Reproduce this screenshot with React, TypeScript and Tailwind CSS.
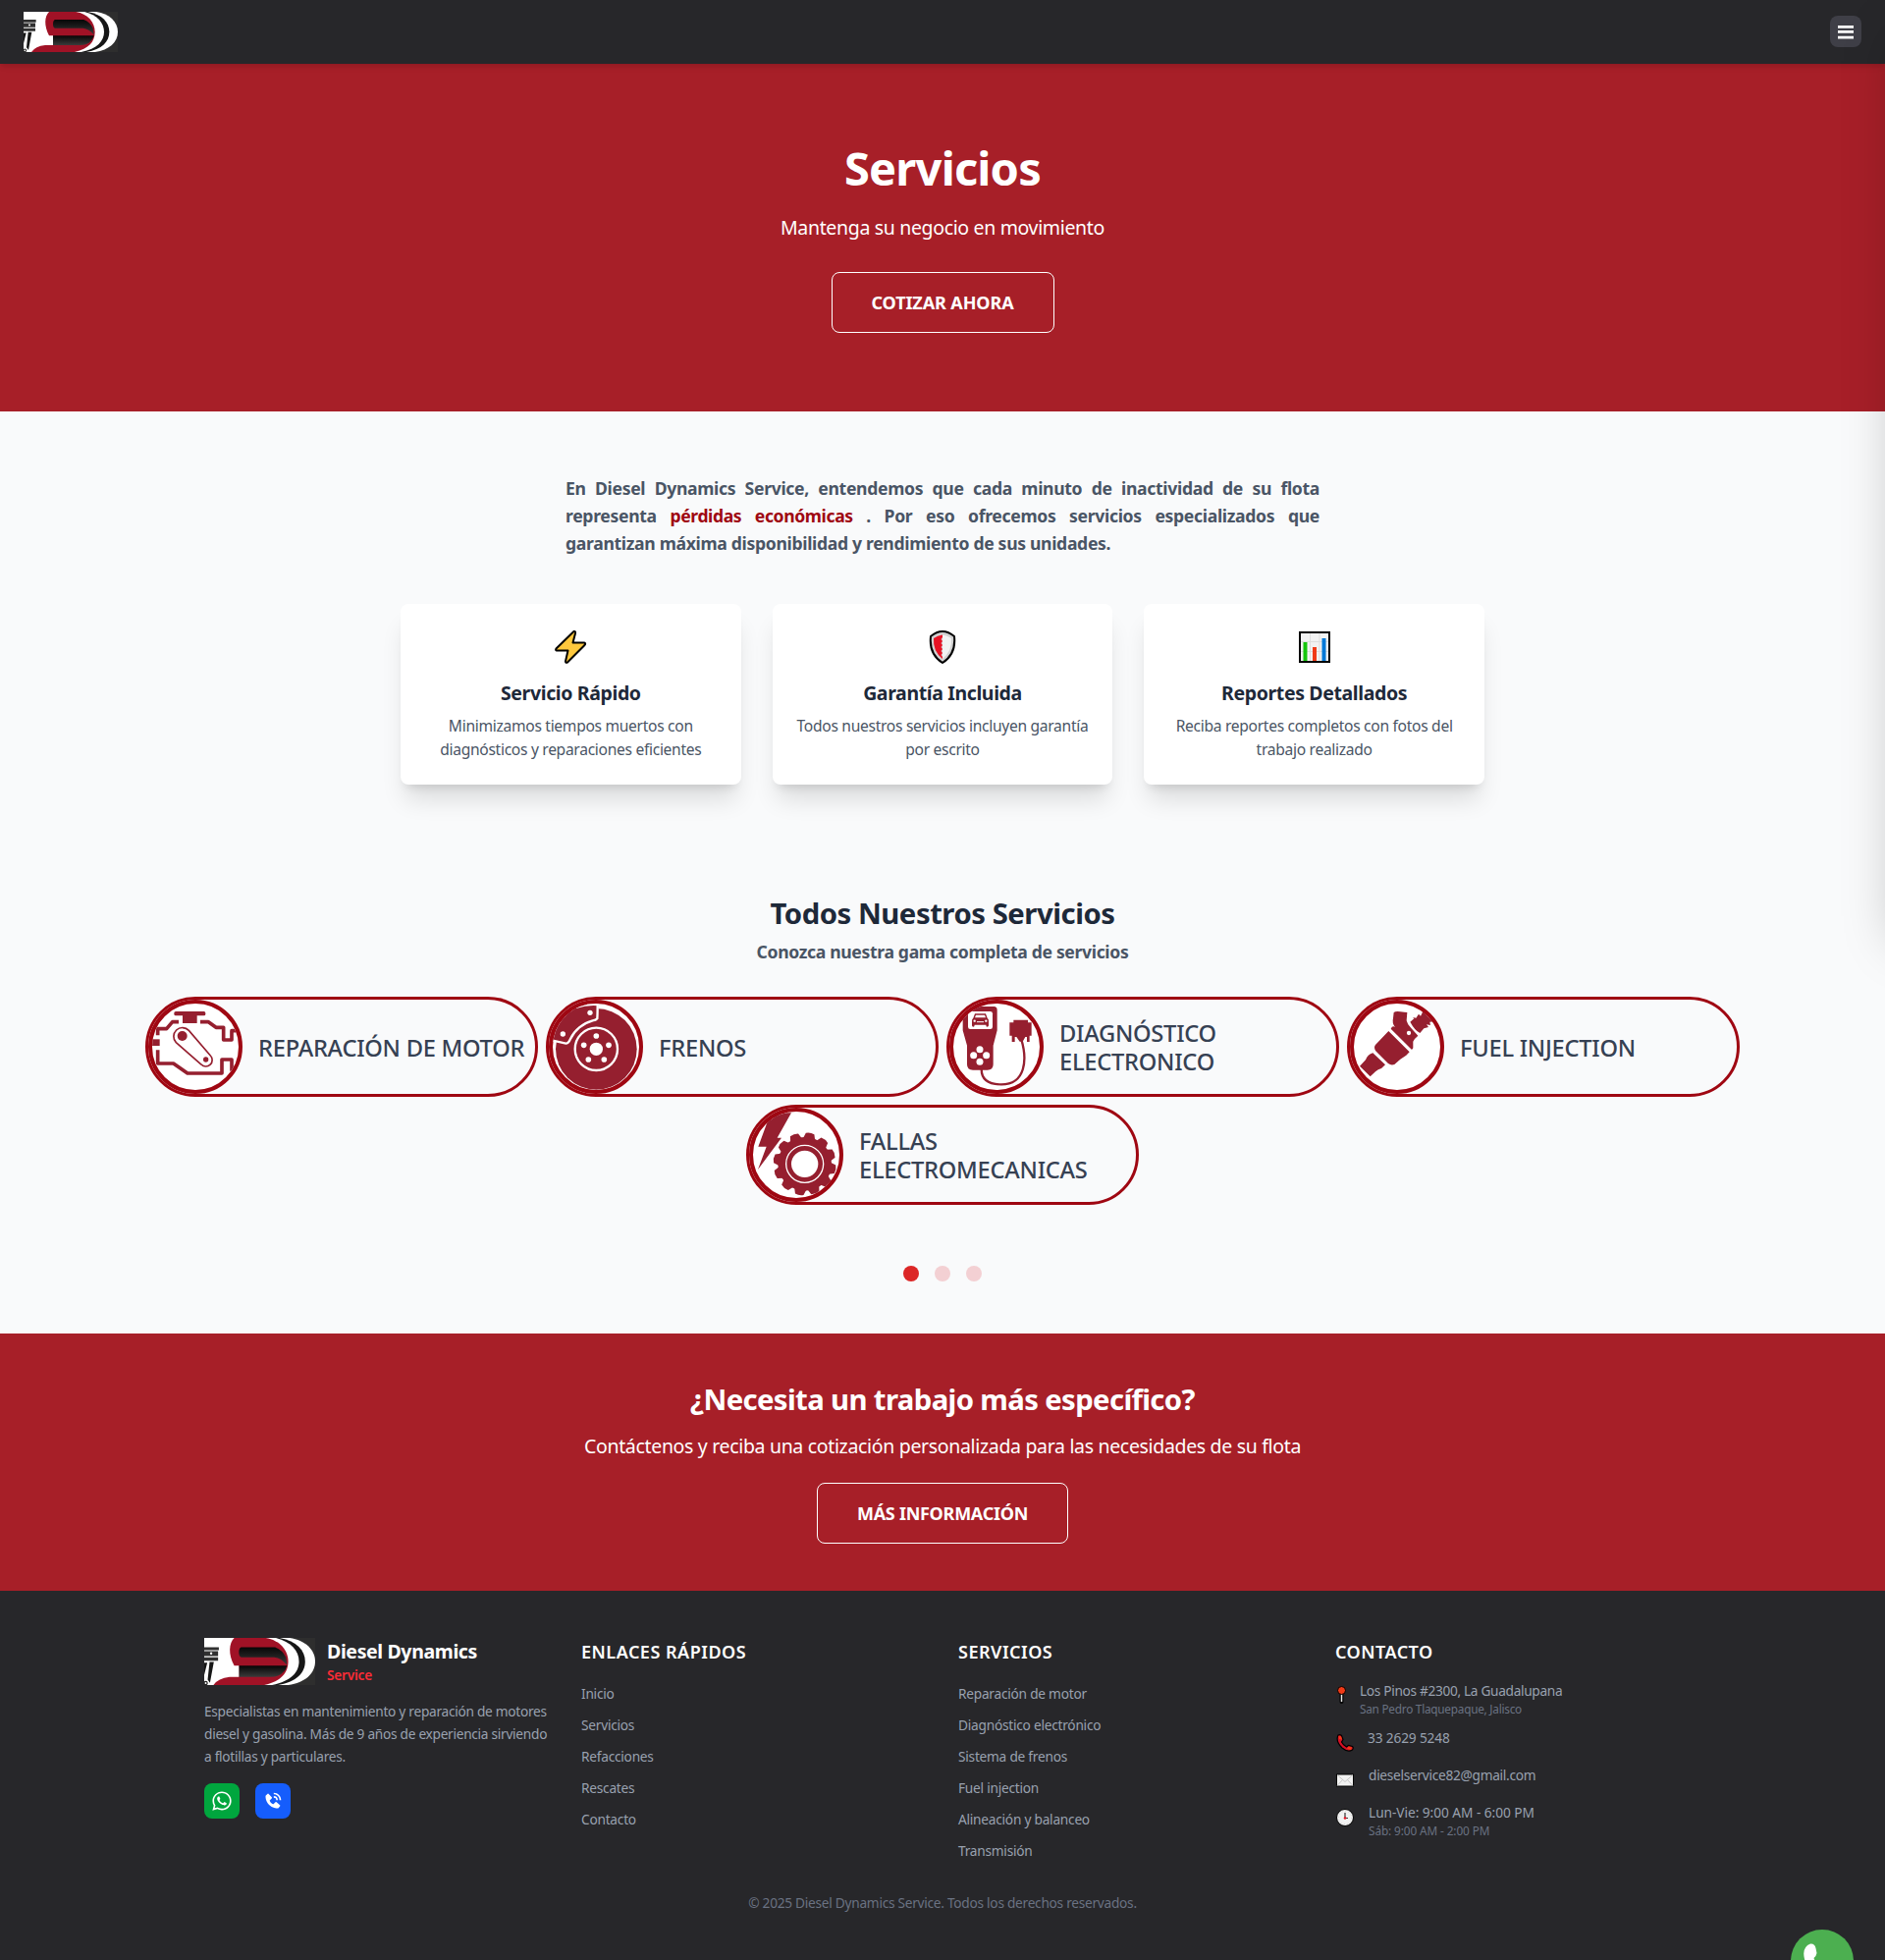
import React from "react";
import { FaWhatsapp } from "react-icons/fa";
import { BiSolidPhoneCall } from "react-icons/bi";

const RED = "#951f2f";

function Logo({ className }: { className: string }) {
  return (
    <svg viewBox="0 0 288 122" preserveAspectRatio="none" className={className}>
      <defs>
        <linearGradient id="logoHole" x1="0" y1="0" x2="0" y2="1">
          <stop offset="0" stopColor="#060606" />
          <stop offset="1" stopColor="#3a3a3a" />
        </linearGradient>
      </defs>
      <rect width="288" height="122" fill="#2e2e2e" />
      <path d="M0 0H222C262 6 288 30 288 61S262 116 218 122H0Z" fill="#fff" />
      <path d="M0 0H196C240 8 262 32 262 61S240 114 192 122H0Z" fill="#161616" />
      <path d="M0 0H186C226 10 246 34 246 61S226 112 176 122H0Z" fill="#fff" />
      <path d="M0 0H160C196 6 218 32 218 61S200 112 156 122H0Z" fill="#a01226" />
      <path d="M96 24H184Q204 32 212 50L215 70Q200 52 182 50H96Q90 48 90 37T96 24Z" fill="url(#logoHole)" />
      <path d="M90 72H215Q210 90 192 98Q184 101 172 101H90Z" fill="url(#logoHole)" />
      <path d="M0 0H78C64 14 62 42 78 72H90V101H66Q36 104 24 122H0Z" fill="#fff" />
      <path d="M0 24H38V32H0ZM0 34H36V47H0ZM0 50H36V59H0Z" fill="#303030" />
      <circle cx="18" cy="40" r="3" fill="#fff" />
      <path d="M14 62H25L15 116L9 108ZM0 64H8L0 96Z" fill="#161616" />
      <circle cx="4" cy="117" r="4" fill="none" stroke="#222" strokeWidth="3" />
    </svg>
  );
}

function EngineIcon() {
  return (
    <g fill="none" stroke={RED} strokeWidth="11">
      <rect x="67" y="24" width="96" height="13" rx="5" fill={RED} stroke="none" />
      <rect x="93" y="33" width="44" height="27" fill={RED} stroke="none" />
      <path d="M17 97V77H44L62 56H81M147 56H172L195 73H218V111H243V83H270" strokeLinejoin="round" />
      <rect x="0" y="109" width="23" height="20" fill={RED} stroke="none" />
      <path d="M17 142V183H65L108 213H213V171H243V206" strokeLinejoin="round" />
      <path d="M73 119A26 26 0 1 1 112 82L178 159A19 19 0 0 1 150 186Z" strokeWidth="5" />
      <circle cx="92" cy="99" r="15" fill={RED} stroke="none" />
      <circle cx="164" cy="171" r="8" fill={RED} stroke="none" />
    </g>
  );
}

function BrakeIcon() {
  return (
    <g>
      <circle cx="133" cy="139" r="124" fill={RED} />
      <path d="M-4 112V-4H139V48C96 56 62 80 46 124Z" fill={RED} />
      <path d="M70 12Q105 0 137 3Q137 30 136 46Q132 51 122 52C92 60 66 82 54 108Q48 122 40 122L0 113" fill="none" stroke="#fff" strokeWidth="7" />
      <circle cx="114" cy="28" r="8" fill="#fff" />
      <circle cx="31" cy="93" r="8" fill="#fff" />
      <circle cx="133" cy="139" r="65" fill="none" stroke="#fff" strokeWidth="7" />
      <circle cx="133" cy="139" r="20" fill="#fff" />
      {[[133, 99], [95, 127], [171, 127], [109, 171], [157, 171]].map(([x, y]) => (
        <circle key={`${x}-${y}`} cx={x} cy={y} r="8.5" fill="#fff" />
      ))}
    </g>
  );
}

function ScannerIcon() {
  return (
    <g fill={RED}>
      <path d="M40 9H124Q134 9 134 20V82L122 128V186Q122 203 104 203H60Q42 203 42 186V128L29 82V20Q30 9 40 9Z" />
      <rect x="45" y="24" width="75" height="54" rx="7" fill="#fff" />
      <path d="M66 31H99L104 44Q109 47 108 55V67Q108 71 103 71Q100 71 100 65H65Q65 71 61 71Q57 71 57 67V55Q56 47 61 44Z" />
      <path d="M69 35H96L99 43H66Z" fill="#fff" />
      <circle cx="65" cy="53" r="3.5" fill="#fff" />
      <circle cx="100" cy="53" r="3.5" fill="#fff" />
      <path d="M72 56H93" stroke="#fff" strokeWidth="3" />
      {[[81, 140], [62, 158], [101, 158], [81, 178]].map(([x, y]) => (
        <circle key={`${x}-${y}`} cx={x} cy={y} r="10.5" fill="#fff" />
      ))}
      <path d="M184 50H228V58H239V98H233V117H225V102H220L212 116H203L193 102H188V117H179V98H172V58H184Z" />
      <path d="M208 110C226 170 222 247 147 247C100 247 86 226 86 200" fill="none" stroke={RED} strokeWidth="7" />
    </g>
  );
}

function InjectorIcon() {
  return (
    <g fill={RED}>
      <path d="M122 27Q128 23 142 25T163 27L161 52Q163 64 175 75L196 98Q186 106 181 116V136L177 141L113 77Q118 66 126 72Q116 60 120 45Z" />
      <circle cx="168" cy="90" r="6.5" fill="#fff" />
      <path d="M106 84L170 148L160 158L142 170L124 186Q114 190 105 183L66 144Q60 134 66 126Z" />
      <path d="M58 151L96 187L84 198Q74 200 66 208L50 223L18 191L36 172Q42 156 58 151Z" />
      <path d="M172 56L184 46L180 42L190 44L198 32L204 38L210 26L216 22L240 40L246 55L232 56L234 66L222 64L228 72L214 76L202 90Q186 82 172 56Z" />
    </g>
  );
}

function GearIcon() {
  const teeth = Array.from({ length: 12 }, (_, i) => i * 30 + 10);
  return (
    <g fill={RED}>
      <path d="M54 4L117 4L74 80H87L15 177L41 107H16Z" />
      <circle cx="158" cy="160" r="82" />
      {teeth.map((a) => (
        <path key={a} d="M138 88L145 66Q158 61 171 66L178 88Z" transform={`rotate(${a} 158 160)`} />
      ))}
      <circle cx="158" cy="160" r="57" fill="none" stroke="#fff" strokeWidth="4" />
      <circle cx="158" cy="160" r="41" fill="#fff" />
    </g>
  );
}

const services = [
  { name: "REPARACIÓN DE MOTOR", Icon: EngineIcon },
  { name: "FRENOS", Icon: BrakeIcon },
  { name: "DIAGNÓSTICO ELECTRONICO", Icon: ScannerIcon },
  { name: "FUEL INJECTION", Icon: InjectorIcon },
  { name: "FALLAS ELECTROMECANICAS", Icon: GearIcon },
];

function BoltEmoji() {
  return (
    <svg width="34" height="36" viewBox="0 0 34 36">
      <path d="M20.500 2Q22.500 1.500 22 4L19.500 13.500H31Q33 14 31.500 16L14 33.500Q12 34.500 12 32.500L14.500 21.500H3Q1.500 21 2.500 19.500Z" fill="#ffc83d" stroke="#000" strokeWidth="2" strokeLinejoin="round" />
    </svg>
  );
}

function ShieldEmoji() {
  return (
    <svg width="28" height="36" viewBox="0 0 28 36">
      <path d="M14 2Q20 2 26 7Q28 25 14 34Q0 25 2 7Q8 2 14 2Z" fill="#d2d2d2" stroke="#000" strokeWidth="2" strokeLinejoin="round" />
      <path d="M14 5.500Q19 6 23 9Q24 22 14 30Z" fill="#f2f2f2" />
      <path d="M14 5.500Q9 6 5 9Q4 22 14 30V28L12.500 26L14 24L12.500 22L14 20L12.500 18L14 16L12.500 14L14 12L12.500 10L14 8Z" fill="#e81224" />
    </svg>
  );
}

function ChartEmoji() {
  return (
    <svg width="34" height="36" viewBox="0 0 34 36">
      <rect x="2" y="3" width="30" height="30" fill="#f2f2f2" stroke="#000" strokeWidth="2" />
      <path d="M3 12.500H31M3 22.500H31M12.500 4V32M22 4V32" stroke="#dedede" strokeWidth="1" />
      <path d="M5.500 13H9.500V32H5.500Z" fill="#16c60c" />
      <path d="M15 18H19V32H15Z" fill="#f03a17" />
      <path d="M24.500 9H28.500V32H24.500Z" fill="#0078d7" />
    </svg>
  );
}

const features = [
  { Icon: BoltEmoji, title: "Servicio Rápido", text: "Minimizamos tiempos muertos con diagnósticos y reparaciones eficientes" },
  { Icon: ShieldEmoji, title: "Garantía Incluida", text: "Todos nuestros servicios incluyen garantía por escrito" },
  { Icon: ChartEmoji, title: "Reportes Detallados", text: "Reciba reportes completos con fotos del trabajo realizado" },
];

function PinEmoji() {
  return (
    <svg width="13" height="20" viewBox="0 0 13 20">
      <path d="M6.500 9V17" stroke="#000" strokeWidth="4" strokeLinecap="round" />
      <path d="M6.500 8V17" stroke="#e8e8e8" strokeWidth="1.500" />
      <circle cx="6.500" cy="5.500" r="4" fill="#f03a17" stroke="#000" />
    </svg>
  );
}

function PhoneEmoji() {
  return (
    <svg width="20" height="20" viewBox="0 0 20 20">
      <path d="M3 2Q5 1 6.500 2.500L8 6.500L6.500 9Q8 12 11.500 14L13.500 12.500L17.500 13.500Q19 15 17.500 17Q13 20 7 15Q0 8 3 2Z" fill="#d50f25" stroke="#000" strokeWidth="1.200" />
      <path d="M3.500 3L6 3.300L7 6.500L4 6ZM13.500 13.500L17 14.500L16 17L12 16Z" fill="#f03a17" />
    </svg>
  );
}

function MailEmoji() {
  return (
    <svg width="20" height="20" viewBox="0 0 20 20">
      <rect x="1.500" y="4" width="17" height="12" fill="#f2f2f2" stroke="#000" />
      <path d="M2 4.500L10 11.500L18 4.500M2 15.500L7.500 9.500M18 15.500L12.500 9.500" fill="none" stroke="#bcbcbc" strokeWidth="0.800" />
    </svg>
  );
}

function ClockEmoji() {
  return (
    <svg width="20" height="20" viewBox="0 0 20 20">
      <circle cx="10" cy="10" r="8.500" fill="#f2f2f2" stroke="#000" />
      <circle cx="10" cy="10" r="6.700" fill="none" stroke="#c4c4c4" strokeWidth="1" strokeDasharray="0.800 2.700" />
      <path d="M10 5V10.500H13" fill="none" stroke="#333" strokeWidth="1.200" />
      <circle cx="10" cy="10.500" r="1.300" fill="#e81224" />
    </svg>
  );
}

const quickLinks = ["Inicio", "Servicios", "Refacciones", "Rescates", "Contacto"];
const serviceLinks = ["Reparación de motor", "Diagnóstico electrónico", "Sistema de frenos", "Fuel injection", "Alineación y balanceo", "Transmisión"];

function LinkColumn({ title, links }: { title: string; links: string[] }) {
  return (
    <div>
      <h4 className="mb-[19px] text-lg leading-7 font-semibold tracking-[0.5px]">{title}</h4>
      <ul className="space-y-3 text-[13.7px] leading-5 tracking-[-0.24px] text-gray-400">
        {links.map((l) => (
          <li key={l}>{l}</li>
        ))}
      </ul>
    </div>
  );
}

export default function App() {
  return (
    <div className="relative h-[1996px] w-full overflow-hidden bg-[#27272a] font-['Noto_Sans',sans-serif] text-white">
      <header className="relative z-10 flex h-[65px] items-center justify-between bg-[#27272a] px-6 shadow-md">
        <Logo className="h-[41px] w-24" />
        <button className="mb-px flex h-8 w-8 items-center justify-center rounded-lg bg-zinc-700">
          <svg width="16" height="16" viewBox="0 0 16 16" fill="#fff">
            <path d="M0 2H16V4.700H0ZM0 7H16V9.700H0ZM0 12.800H16V15.500H0Z" />
          </svg>
        </button>
      </header>

      <section className="flex h-[354px] flex-col items-center bg-[#a71f28] pt-[82px]">
        <h1 className="mb-[23px] text-[47px] leading-[48px] font-bold tracking-[-0.79px]">Servicios</h1>
        <p className="mb-[31px] text-[19.5px] leading-7 tracking-[-0.34px]">Mantenga su negocio en movimiento</p>
        <button className="h-[62px] w-[227px] rounded-lg border border-white text-lg font-bold tracking-[-0.1px]">COTIZAR AHORA</button>
      </section>

      <main className="h-[939px] bg-gray-50 pt-16">
        <p className="mx-auto w-[768px] text-justify text-[17.6px] leading-7 font-bold tracking-[-0.33px] text-gray-600">
          En Diesel Dynamics Service, entendemos que cada minuto de inactividad de su flota representa{" "}
          <span className="tracking-[-0.4px] text-red-800">pérdidas económicas</span> . Por eso ofrecemos servicios especializados que
          garantizan máxima disponibilidad y rendimiento de sus unidades.
        </p>

        <div className="mx-auto mt-12 grid w-[1104px] grid-cols-3 gap-8">
          {features.map(({ Icon, title, text }) => (
            <div key={title} className="flex h-[184px] flex-col items-center rounded-lg bg-white px-5 pt-6 text-center shadow-[0_20px_25px_-5px_rgba(0,0,0,0.12),0_8px_10px_-6px_rgba(0,0,0,0.12)]">
              <div className="mb-[13px] flex h-10 items-center justify-center">
                <Icon />
              </div>
              <h3 className="mb-[7px] text-[19.5px] leading-7 font-bold tracking-[-0.38px] text-gray-800">{title}</h3>
              <p className="text-[15.6px] leading-6 tracking-[-0.3px] text-gray-600">{text}</p>
            </div>
          ))}
        </div>

        <div className="mt-[113px] text-center">
          <h2 className="mb-[7px] text-[29.3px] leading-9 font-bold tracking-[-0.47px] text-gray-800">Todos Nuestros Servicios</h2>
          <p className="text-[17.6px] leading-7 font-bold tracking-[-0.35px] text-gray-600">Conozca nuestra gama completa de servicios</p>
        </div>

        <div className="mt-8 flex flex-wrap justify-center gap-2 px-8">
          {services.map(({ name, Icon }) => (
            <div key={name} className="flex h-[102px] w-[400px] items-center gap-4 rounded-full border-3 border-[#9f0712]">
              <div className="h-24 w-24 shrink-0 overflow-hidden rounded-full border-4 border-[#9f0712] bg-white">
                <svg viewBox="0 0 264 264" className="h-22 w-22">
                  <Icon />
                </svg>
              </div>
              <span className="pt-0.5 text-[23.7px] leading-[29px] font-medium tracking-[-0.26px] text-gray-700">{name}</span>
            </div>
          ))}
        </div>

        <div className="mt-[62px] flex justify-center gap-4">
          <span className="h-4 w-4 rounded-full bg-[#dc2626]" />
          <span className="h-4 w-4 rounded-full bg-[#f3d0d3]" />
          <span className="h-4 w-4 rounded-full bg-[#f3d0d3]" />
        </div>
      </main>

      <section className="flex h-[262px] flex-col items-center bg-[#a71f28] pt-[49px]">
        <h2 className="mb-4 text-[29.3px] leading-9 font-bold tracking-[-0.63px]">¿Necesita un trabajo más específico?</h2>
        <p className="mb-[23px] text-[19.5px] leading-7 tracking-[-0.33px]">
          Contáctenos y reciba una cotización personalizada para las necesidades de su flota
        </p>
        <button className="h-[62px] w-64 rounded-lg border border-white text-lg font-bold tracking-[-0.27px]">MÁS INFORMACIÓN</button>
      </section>

      <footer className="mx-auto w-[1504px] pt-12">
        <div className="grid h-[228px] grid-cols-4 gap-8">
          <div>
            <div className="flex h-12 items-center gap-3">
              <Logo className="h-12 w-[113px]" />
              <div>
                <div className="text-[19.5px] leading-7 font-bold tracking-[-0.37px]">Diesel Dynamics</div>
                <div className="text-[13.7px] leading-5 font-semibold tracking-[-0.25px] text-[#fb2c36]">Service</div>
              </div>
            </div>
            <p className="mt-4 text-[13.7px] leading-[22.75px] tracking-[-0.28px] text-gray-400">
              Especialistas en mantenimiento y reparación de motores diesel y gasolina. Más de 9 años de experiencia sirviendo a
              flotillas y particulares.
            </p>
            <div className="mt-4 flex gap-4">
              <span className="flex h-9 w-9 items-center justify-center rounded-lg bg-[#00a63e]">
                <FaWhatsapp size={22} />
              </span>
              <span className="flex h-9 w-9 items-center justify-center rounded-lg bg-[#155dfc]">
                <BiSolidPhoneCall size={20} />
              </span>
            </div>
          </div>

          <LinkColumn title="ENLACES RÁPIDOS" links={quickLinks} />
          <LinkColumn title="SERVICIOS" links={serviceLinks} />

          <div>
            <h4 className="mb-4 text-lg leading-7 font-semibold tracking-[0.47px]">CONTACTO</h4>
            <ul className="space-y-3 text-[13.7px] leading-5 tracking-[-0.33px] text-gray-400">
              <li className="flex gap-3">
                <span className="w-[13px] pt-1">
                  <PinEmoji />
                </span>
                <div>
                  <div>Los Pinos #2300, La Guadalupana</div>
                  <div className="text-[11.8px] leading-[17px] tracking-[-0.25px] text-gray-500">San Pedro Tlaquepaque, Jalisco</div>
                </div>
              </li>
              <li className="-mt-px flex h-[26px] gap-[13px]">
                <span className="pt-[5px]">
                  <PhoneEmoji />
                </span>
                <span className="tracking-[-0.15px]">33 2629 5248</span>
              </li>
              <li className="flex h-[26px] gap-[13px]">
                <span className="pt-[5px]">
                  <MailEmoji />
                </span>
                <span className="pl-px tracking-[-0.29px]">dieselservice82@gmail.com</span>
              </li>
              <li className="flex gap-[13px]">
                <span className="pt-[5px]">
                  <ClockEmoji />
                </span>
                <div className="pl-px">
                  <div className="tracking-[-0.04px]">Lun-Vie: 9:00 AM - 6:00 PM</div>
                  <div className="text-[11.8px] leading-[17px] tracking-[-0.1px] text-gray-500">Sáb: 9:00 AM - 2:00 PM</div>
                </div>
              </li>
            </ul>
          </div>
        </div>
        <p className="mt-8 text-center text-[13.7px] leading-5 tracking-[-0.27px] text-gray-500">
          © 2025 Diesel Dynamics Service. Todos los derechos reservados.
        </p>
      </footer>

      <div className="absolute top-0 left-full z-20 h-[945px] w-80 shadow-[0_25px_50px_-12px_rgba(0,0,0,0.25)]" />

      <a className="absolute top-[1965px] right-8 h-16 w-16 rounded-full bg-[#4caf50]">
        <svg viewBox="0 0 64 64" className="h-16 w-16" fill="#fff">
          <path d="M20 14.500Q24.500 14 25.500 19L26.500 24Q26 27 23.500 29Q27 39 36 42L41 38L50 42Q50 50 42 50Q20 48 14 30Q11 18 20 14.500Z" />
        </svg>
      </a>
    </div>
  );
}
